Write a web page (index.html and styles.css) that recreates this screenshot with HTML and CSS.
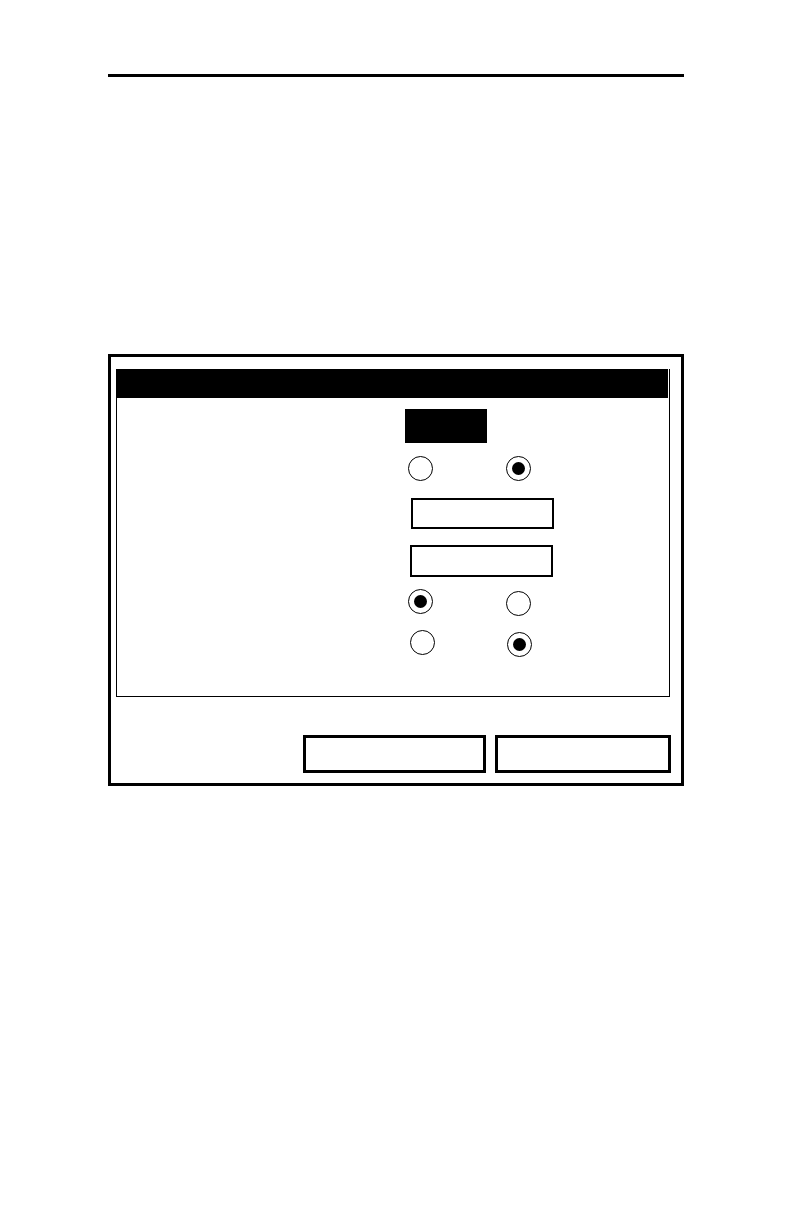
FILE: index.html
```html
<!DOCTYPE html>
<html lang="en">
<head>
<meta charset="utf-8">
<title>Dialog</title>
<link rel="stylesheet" href="styles.css">
</head>
<body>
<div class="page">
  <div class="rule"></div>
  <div class="frame">
    <div class="panel">
      <div class="titlebar"></div>
      <div class="content">
        <div class="row row-a"><div class="blackbox"></div></div>
        <div class="row row-b">
          <div class="radio"></div>
          <div class="radio on r2"></div>
        </div>
        <div class="row row-c"><div class="field field-c"></div></div>
        <div class="row row-d"><div class="field"></div></div>
        <div class="row row-e">
          <div class="radio on"></div>
          <div class="radio r2 drop2"></div>
        </div>
        <div class="row row-f">
          <div class="radio"></div>
          <div class="radio on r2f drop2"></div>
        </div>
      </div>
    </div>
    <div class="buttons">
      <div class="btn btn-1"></div>
      <div class="btn btn-2"></div>
    </div>
  </div>
</div>
</body>
</html>
```

FILE: styles.css
```css
html, body {
  margin: 0;
  padding: 0;
  background: #fff;
  font-family: "Liberation Sans", Arial, sans-serif;
}

.page {
  width: 792px;
  height: 1224px;
  padding-left: 108px;
  padding-top: 74px;
  box-sizing: border-box;
}

.rule {
  width: 576px;
  height: 3px;
  background: #000;
}

.frame {
  margin-top: 277px;
  width: 576px;
  height: 432px;
  border: 3px solid #000;
  box-sizing: border-box;
  padding: 12px 0 0 5px;
  display: flex;
  flex-direction: column;
}

.panel {
  width: 554px;
  height: 328px;
  border: 1px solid #000;
  border-top: none;
  box-sizing: border-box;
}

.titlebar {
  height: 29px;
  background: #000;
  margin-left: -1px;
  margin-right: 1px;
}

.content {
  padding-top: 11px;
}

.row {
  display: flex;
  align-items: flex-start;
}

.blackbox {
  width: 82px;
  height: 34px;
  background: #000;
  margin-left: 288px;
}

.row-b { margin-top: 13px; padding-left: 291px; }
.row-c { margin-top: 17px; padding-left: 294px; }
.row-d { margin-top: 16px; padding-left: 293px; }
.row-e { margin-top: 12px; padding-left: 291px; }
.row-f { margin-top: 14px; padding-left: 293px; }

.radio {
  width: 25px;
  height: 25px;
  border: 1px solid #000;
  border-radius: 50%;
  box-sizing: border-box;
  display: flex;
  align-items: center;
  justify-content: center;
  background: #fff;
}

.radio.on::after {
  content: "";
  width: 13px;
  height: 13px;
  border-radius: 50%;
  background: #000;
}

.r2 { margin-left: 73px; }
.r2f { margin-left: 72px; }
.drop2 { margin-top: 2px; }

.field {
  width: 143px;
  height: 32px;
  border: 2px solid #000;
  box-sizing: border-box;
  background: #fff;
}

.field-c { height: 31px; }

.buttons {
  margin-top: 38px;
  display: flex;
  justify-content: flex-end;
  gap: 9px;
  padding-right: 10px;
}

.btn {
  height: 38px;
  border: 3px solid #000;
  box-sizing: border-box;
  background: #fff;
}

.btn-1 { width: 183px; }
.btn-2 { width: 176px; }
```
